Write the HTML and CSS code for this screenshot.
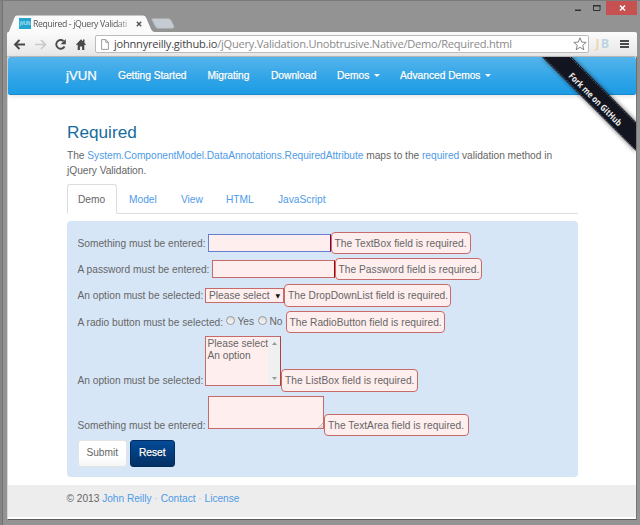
FILE: index.html
```html
<!DOCTYPE html>
<html lang="en">
<head>
<meta charset="utf-8">
<title>Required - jQuery Validation</title>
<link rel="stylesheet" href="styles.css">
</head>
<body>
<div class="window">
  <header class="titlebar">
    <div class="tab">
      <svg class="tab-shape" viewBox="0 0 166 18"><path d="M0 18C2 17 2.500 16 3 14L7.500 2.500Q8.300 .5 10 .5H136Q138 .5 139 2.500L144 14Q145 17 148 17.500L148 18Z" fill="#fafafa"/><path d="M146 3.500H161Q163 3.500 164 5L167 11Q167.500 13.500 165 13.500H151.500Q149 13.500 148 11L145 5Q144 3.500 146 3.500Z" fill="#c4cbd2" stroke="#a7abae" stroke-width=".6"/></svg>
      <span class="favicon">jVUN</span>
      <span class="tab-title">Required - jQuery Validati</span>
      <svg class="tab-close" viewBox="0 0 6 6"><path d="M.8 .8L5.200 5.200M5.200 .8L.8 5.200" stroke="#4b4b4b" stroke-width="1.3"/></svg>
    </div>
    <div class="controls">
      <svg width="62" height="15" viewBox="0 0 62 15"><path d="M0 8.500h6v1.500H0z" fill="#303030"/><path d="M18.500 4.500h6.500v5h-6.500z" fill="none" stroke="#303030"/><path d="M18 4h7.500v1.500H18z" fill="#303030"/><path d="M31 0h31.500v14H31z" fill="#c75050"/><path d="M45 4.500l5 5M50 4.500l-5 5" stroke="#fff" stroke-width="1.500"/></svg>
    </div>
  </header>
  <div class="toolbar">
    <svg class="nav-icons" viewBox="0 0 80 25"><g fill="none" stroke="#494949" stroke-width="1.900"><path d="M18 12.500H8.500M12.500 8L8 12.500l4.500 4.500"/><path d="M28 12.500h9.500M34 8l4.500 4.500L34 17" stroke="#c9c9c9" stroke-width="1.600"/><path d="M57.500 14.500a4.400 4.400 0 1 1-1-5.500"/></g><path d="M58.800 7v5.200h-5.200z" fill="#494949"/><path d="M69 12.500L74 7.300l5 5.200-1 .8-.7-.7V18h-2.200v-3.500h-2.200V18h-2.200v-5.400l-.8.7zM76 7.500h1.500v3H76z" fill="#494949"/></svg>
    <div class="address">
      <svg class="page-icon" viewBox="0 0 8 11"><path d="M.6 .6H4.800L7.400 3.300V10.400H.6ZM4.800 .6V3.300H7.400" fill="none" stroke="#929292" stroke-width=".9"/></svg>
      <span class="url"><b>johnnyreilly.github.io</b>/jQuery.Validation.Unobtrusive.Native/Demo/Required.html</span>
      <svg class="star" viewBox="0 0 14 14"><path d="M7 .8L8.700 5.100L13.200 5.400L9.700 8.300L10.900 12.800L7 10.300L3.100 12.800L4.300 8.300L.8 5.400L5.300 5.100Z" fill="#fff" stroke="#777" stroke-width=".9"/></svg>
    </div>
    <span class="jb"><i>J</i>B</span>
    <span class="menu"></span>
  </div>
  <main class="page">
    <nav class="navbar">
      <a class="brand">jVUN</a>
      <a class="n1">Getting Started</a><a class="n2">Migrating</a><a class="n3">Download</a><a class="n4 drop">Demos</a><a class="n5 drop">Advanced Demos</a>
    </nav>
    <svg class="ribbon" viewBox="0 0 98 100"><defs><filter id="shade" x="-20%" y="-20%" width="140%" height="140%"><feGaussianBlur stdDeviation="2"/></filter></defs><path d="M4 0H34L98 64V95Z" fill="#000" opacity=".5" filter="url(#shade)"/><path d="M4 0H33.500L98 65V94Z" fill="#12141f"/><path d="M5.500 0L98 93M32 0L98 66.500" fill="none" stroke="#777b80" stroke-width=".8" stroke-dasharray="1.500 1"/><text x="0" y="0" transform="translate(30 19.500) rotate(45)" textLength="71" lengthAdjust="spacingAndGlyphs">Fork me on GitHub</text></svg>
    <section class="content">
      <h1><span>Required</span></h1>
      <p>The <a>System.ComponentModel.DataAnnotations.RequiredAttribute</a> maps to the <a>required</a> validation method in<br>jQuery Validation.</p>
      <div class="tabs"><span class="active">Demo</span><a class="t2">Model</a><a class="t3">View</a><a class="t4">HTML</a><a>JavaScript</a></div>
      <form class="panel">
        <div class="row"><label class="l1">Something must be entered:</label><input class="field focused" type="text"><span class="error e1">The TextBox field is required.</span></div>
        <div class="row"><label class="l2">A password must be entered:</label><input class="field" type="password"><span class="error e2">The Password field is required.</span></div>
        <div class="row"><label class="l3">An option must be selected:</label><div class="select">Please select<i>▼</i></div><span class="error e3">The DropDownList field is required.</span></div>
        <div class="row"><label class="l4">A radio button must be selected:</label><span class="radio"></span><span class="yes">Yes</span><span class="radio"></span><span class="no">No</span><span class="error e4">The RadioButton field is required.</span></div>
        <div class="row list-row"><label class="l3">An option must be selected:</label><div class="listbox"><div>Please select<br>An option</div><div class="scroll"><svg viewBox="0 0 5 3"><path d="M0 3L2.500 0L5 3Z"/></svg><svg viewBox="0 0 5 3"><path d="M0 0L2.500 3L5 0Z"/></svg></div></div><span class="error e5">The ListBox field is required.</span></div>
        <div class="row area-row"><label class="l1">Something must be entered:</label><div class="textarea"><svg viewBox="0 0 6 6"><path d="M0 6L6 0M3 6L6 3" stroke="#8b8484" stroke-width=".7"/></svg></div><span class="error e6">The TextArea field is required.</span></div>
        <div class="buttons"><button type="button">Submit</button><button type="button" class="reset">Reset</button></div>
      </form>
    </section>
    <footer>© 2013 <a>John Reilly</a> <s>·</s> <a>Contact</a> <s>·</s> <a>License</a></footer>
  </main>
</div>
</body>
</html>
```
FILE: styles.css
```css
* { box-sizing: border-box; }
html, body { margin: 0; width: 640px; height: 525px; overflow: hidden; }
body { font: 10.2px/14.6px "Liberation Sans", Arial, sans-serif; color: #666; background: #939393; }
i, s { font-style: normal; text-decoration: none; }
svg { display: block; }
.window { width: 640px; height: 525px; padding: 0 3px 0 7px; border-top: 1px solid #7b7b7b; background: linear-gradient(90deg, #858585 0 2px, #727272 2px 3px, #939393 3px); }
.titlebar { height: 31px; display: flex; justify-content: space-between; }
.tab { position: relative; width: 170px; height: 17px; margin-top: 14px; display: flex; align-items: center; padding-left: 12px; }
.tab-shape { position: absolute; left: 0; top: 0; width: 166px; height: 18px; overflow: visible; }
.favicon { position: relative; width: 12px; height: 11px; margin-right: 2px; background: #24a5cf; color: #e4ffff; font-size: 4.5px; line-height: 11px; text-align: center; }
.tab-title { position: relative; width: 99px; font: 8.7px/16px "Open Sans", sans-serif; letter-spacing: -.36px; color: #555; white-space: nowrap; -webkit-mask-image: linear-gradient(90deg, #000 84%, #0003); }
.tab-close { position: relative; width: 6px; height: 6px; margin-left: 4px; }
.controls { margin-right: -1px; width: 63px; overflow: hidden; }
.toolbar { height: 25px; width: 630px; display: flex; align-items: center; background: linear-gradient(#fbfbfb, #e7e7e7); border-bottom: 1px solid #bdbdbd; border-radius: 2px 2px 0 0; }
.nav-icons { width: 80px; height: 25px; flex: none; }
.address { width: 494px; height: 18px; flex: none; margin-left: 8px; display: flex; align-items: center; border: 1px solid #bcbcbc; border-radius: 2px; background: #fff; }
.page-icon { width: 8px; height: 11px; margin-left: 5px; flex: none; }
.url { width: 400px; flex: none; margin-left: 5px; font: 11.1px/16px "Open Sans", sans-serif; letter-spacing: -.25px; color: #8a8a8a; white-space: nowrap; }
.url b { font-weight: 400; color: #444; }
.star { width: 14px; height: 14px; margin-left: 58.5px; flex: none; }
.jb { width: 14px; margin-left: 6.5px; font: 700 12.5px/18px "Open Sans", sans-serif; color: #bdd5df; white-space: nowrap; }
.jb i { color: #eed7b1; margin-right: 1px; }
.menu { width: 9px; height: 8px; margin-left: 10.5px; background: linear-gradient(#494949 0 2px, transparent 2px 3px, #494949 3px 5px, transparent 5px 6px, #494949 6px); }
.page { position: relative; width: 630px; height: 463px; background: #fff; border-left: 1px solid #d7d7d7; border-right: 1px solid #777; border-bottom: 1px solid #595959; }
.navbar { height: 38px; display: flex; align-items: center; padding: 2px 0 0 58px; border-radius: 2px; color: #fff; font-size: 10.2px; background: linear-gradient(#54b4eb, #2fa4e7 60%, #1d9ce5); border-bottom: 1px solid #178acc; box-shadow: 0 1px 5px #0002; text-shadow: 0 1px #1a6ca066; white-space: nowrap; -webkit-text-stroke: .25px #fff; }
.brand { width: 52px; font-size: 13.2px; }
.n1 { width: 89.5px; } .n2 { width: 63.5px; } .n3 { width: 66px; } .n4 { width: 63px; }
.drop::after { content: ""; display: inline-block; margin-left: 5px; vertical-align: 2px; border: 3px solid transparent; border-top-color: #fff; border-bottom: 0; }
.ribbon { position: absolute; right: 0; top: 0; width: 98px; height: 100px; overflow: hidden; }
.ribbon text { font: 700 9px "Open Sans", sans-serif; fill: #eee; }
.content { width: 511px; margin-left: 59px; height: 390px; padding-top: 27px; }
h1 { margin: 0; font-size: 17.2px; line-height: 20px; font-weight: 400; color: #176b9e; height: 27px; }
p { margin: 0 0 6px; white-space: nowrap; letter-spacing: -.025px; }
a { color: #4f9be8; }
.navbar a { color: #fff; }
.tabs { height: 30px; display: flex; border-bottom: 1px solid #ddd; line-height: 31px; }
.active { width: 50px; height: 30px; padding-left: 10px; margin-right: 12px; border: 1px solid #ddd; border-bottom-color: #fff; border-radius: 3px 3px 0 0; background: #fff; line-height: 29px; }
.t2 { width: 52px; } .t3 { width: 45px; } .t4 { width: 52px; }
.panel { margin-top: 7px; width: 511px; height: 256px; padding: 10.5px 10.5px 0; background: #d7e6f7; border-radius: 4px; }
.row { height: 22.5px; margin-bottom: 3.8px; display: flex; align-items: center; white-space: nowrap; }
label { flex: none; line-height: 22.5px; padding-top: 1px; height: 22.5px; }
.l1 { width: 130.5px; } .l2 { width: 134.500px; } .l3 { width: 127.5px; } .l4 { width: 148px; }
.field { appearance: none; width: 122.5px; height: 18px; margin: 0; padding: 0; background: #fee; border: 1px solid #c66a6a; border-right-color: #a00; border-radius: 0; }
.focused { border-color: #657ed0; border-right-color: #800050; }
.error { height: 22.5px; padding-left: 3px; line-height: 21.5px; letter-spacing: .03px; background: #fee; border: 1px solid #c66a6a; border-radius: 4px; }
.e1 { width: 140px; } .e2 { width: 147.5px; } .e3 { width: 167px; } .e4 { width: 159px; } .e5 { width: 136.5px; } .e6 { width: 145px; }
.select { width: 79px; height: 15px; padding: 0 3px; display: flex; justify-content: space-between; border: 1px solid #c66a6a; background: #fee; line-height: 13px; }
.select i { font: 6px/13px "DejaVu Sans", sans-serif; color: #111; }
.radio { width: 9px; height: 9px; border: 1px solid #999; border-radius: 50%; background: linear-gradient(#ddd, #f5f5f5); position: relative; top: -1px; }
.yes { width: 20px; margin-left: 3px; } .no { width: 16px; margin-left: 3px; }
.list-row { height: 55px; align-items: flex-end; }
.listbox { width: 76px; height: 50px; margin-bottom: 5.5px; display: flex; justify-content: space-between; border: 1px solid #c66a6a; border-right-color: #a44; background: #fee; line-height: 12px; padding-left: 1.500px; }
.listbox > div:first-child { padding-top: .6px; }
.scroll { width: 12px; background: #f0f0f0; display: flex; flex-direction: column; justify-content: space-between; align-items: center; padding: 5px 0; }
.scroll svg { width: 5px; height: 3px; fill: #999; }
.area-row { height: 40.500px; align-items: flex-end; }
.textarea { width: 116px; height: 33px; margin-bottom: 7.5px; display: flex; align-items: flex-end; justify-content: flex-end; background: #fee; border: 1px solid #c66a6a; }
.textarea svg { width: 5px; height: 5px; }
.buttons { display: flex; gap: 3px; }
button { width: 49.500px; height: 27px; padding: 0; font: inherit; color: #666; border: 1px solid #e4e4e4; border-radius: 3px; background: linear-gradient(#fff 60%, #f5f5f5); }
.reset { width: 44.500px; color: #fff; border-color: #002d60; background: linear-gradient(#044b98, #033063); text-shadow: 0 1px #0008; -webkit-text-stroke: .25px #fff; }
footer { height: 32px; margin-top: -.5px; padding-left: 58.500px; background: #ededed; line-height: 28px; letter-spacing: -.03px; }
footer s { color: #bbb; }
```
